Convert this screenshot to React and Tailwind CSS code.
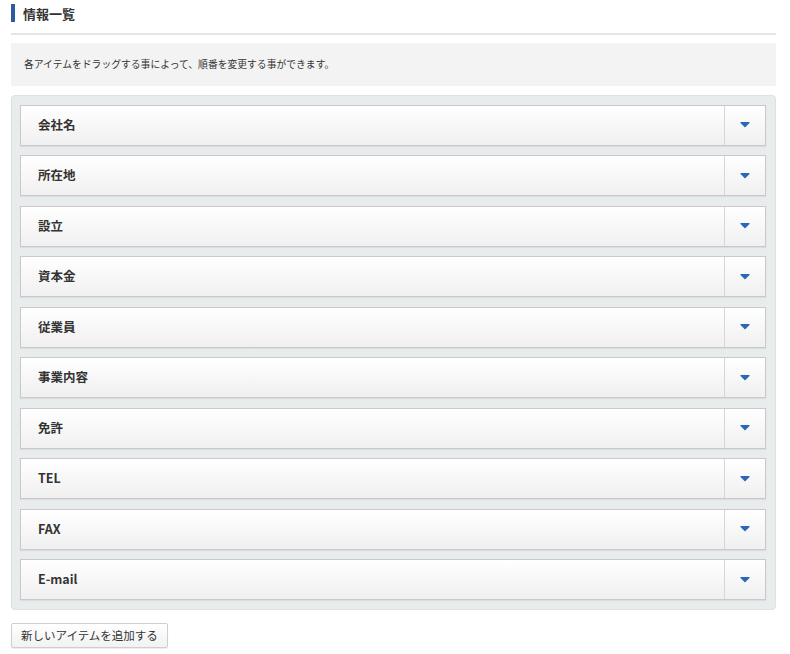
import React from 'react';

const items = ['会社名', '所在地', '設立', '資本金', '従業員', '事業内容', '免許', 'TEL', 'FAX', 'E-mail'];

const Arrow = () => (
  <svg width="10" height="6" viewBox="0 0 10 6">
    <path d="M0.5 0 H9.5 V1 L5 5.5 L0.5 1 Z" fill="#2a67b8" />
  </svg>
);

const Row = ({ label }) => (
  <div className="flex h-[41px] border border-[#c9c9c9] bg-gradient-to-b from-white to-[#f0f0f0] shadow-[0_1px_1px_rgba(0,0,0,0.06)]">
    <div className="flex flex-1 items-center pl-[17px] text-[12.5px] font-bold text-[#333]">{label}</div>
    <div className="flex w-[41px] items-center justify-center border-l border-[#d6d6d6]">
      <Arrow />
    </div>
  </div>
);

export default function App() {
  return (
    <div
      className="h-[654px] w-[790px] bg-white pl-[11px] pr-[14px] pt-[4px] text-[#333]"
      style={{ fontFamily: '"Noto Sans CJK JP", "Noto Sans", sans-serif' }}
    >
      {/* Title */}
      <div className="flex h-[18px] items-center border-l-[4px] border-[#2c5c9f] pl-[8px] text-[13px] font-bold leading-none">
        情報一覧
      </div>
      <div className="mt-[11px] h-[2px] bg-[#e5e5e5]" />

      {/* Note */}
      <div className="mt-[8px] flex h-[43px] items-center bg-[#f3f3f3] pl-[13px] text-[9.8px]">
        各アイテムをドラッグする事によって、順番を変更する事ができます。
      </div>

      {/* Sortable list */}
      <div className="mt-[9px] flex flex-col gap-[9.5px] rounded-[4px] border border-[#dce1e1] bg-[#e8ecec] pb-[9px] pl-[8px] pr-[9px] pt-[8.5px]">
        {items.map((label) => (
          <Row key={label} label={label} />
        ))}
      </div>

      <button className="mt-[13px] h-[25px] rounded-[2px] border border-[#cfcfcf] bg-gradient-to-b from-white to-[#f2f2f2] px-[9px] text-[11.5px] text-[#333] shadow-[0_1px_1px_rgba(0,0,0,0.08)]">
        新しいアイテムを追加する
      </button>
    </div>
  );
}
